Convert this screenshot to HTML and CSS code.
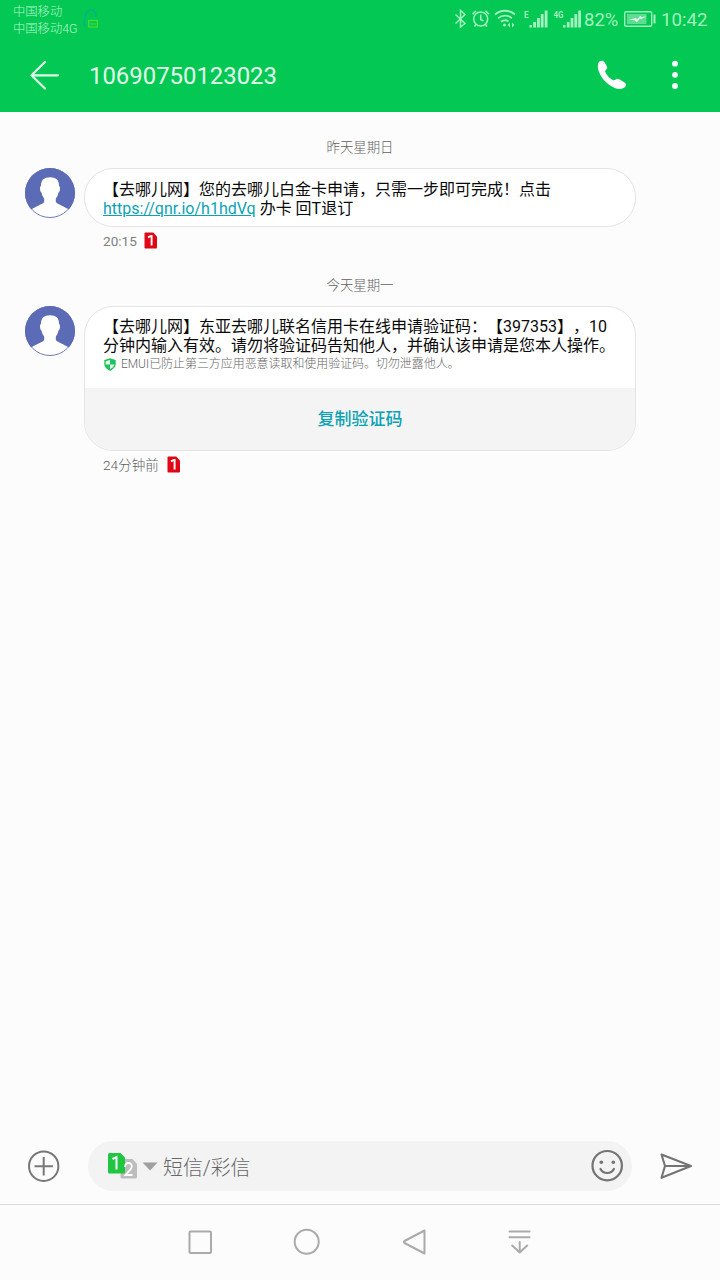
FILE: index.html
```html
<!DOCTYPE html>
<html lang="zh-CN">
<head>
<meta charset="utf-8">
<title>10690750123023</title>
<link rel="stylesheet" href="styles.css">
</head>
<body>
<div class="screen">
  <header class="top">
    <div class="status">
      <div class="carriers"><div>中国移动</div><div>中国移动4G</div></div>
      <svg class="cloud" width="18" height="20" viewBox="82 9 18 20" fill="none"><path d="M85 26c-2-3-1-6 0-9 1-4 3-7 6-7 3 0 5 3 5 7" stroke="#00b386" stroke-width="1.6"/><rect x="88.7" y="20.5" width="8.6" height="6.500" stroke="#4fdc2c" stroke-width="1.2"/><path d="M90 24h6" stroke="#4fdc2c"/></svg>
      <div class="tray">
        <svg width="17" height="40" viewBox="453 0 17 40" fill="none" stroke="currentColor" stroke-width="1.5"><path d="M455.500 14.500L465 23.500L460.500 27V10.500L465 14.500L455.500 23.500"/></svg>
        <svg width="22" height="40" viewBox="470 0 22 40" fill="none" stroke="currentColor" stroke-width="1.6"><circle cx="480.700" cy="19" r="7"/><path d="M480.700 14.500V19.500L483.500 21M472.500 14.200l3.500-3.500M485.500 10.700l3.500 3.500M476 24.500l-1.500 2M485.500 24.500l1.500 2"/></svg>
        <svg width="27" height="40" viewBox="492 0 27 40" fill="none" stroke="currentColor" stroke-width="1.8"><path d="M495 14.500c5.500-5 14.500-5 20 0M498.200 18.200c4-3.500 9.600-3.500 13.600 0M501 21.800c2.500-2 5-2 7.500-.5"/><circle cx="504.500" cy="25" r="1.600" fill="currentColor" stroke="none"/><path d="M507.500 25l2.500-2.500v5zM514.500 25l-2.500-2.500v5z" fill="currentColor" stroke="none"/></svg>
        <svg width="33" height="40" viewBox="519 0 33 40" fill="currentColor"><text class="net" x="524" y="18" textLength="4.500" lengthAdjust="spacingAndGlyphs">E</text><path d="M529.500 25h2.500v2.500h-2.500zM533.200 22h2.800v5.500h-2.800zM537 18h2.800v9.500H537zM540.800 14h2.800v13.500h-2.800zM544.700 10.500h2.800v17h-2.800z"/></svg>
        <svg width="32" height="40" viewBox="552 0 32 40" fill="currentColor"><text class="net" x="553.500" y="18" textLength="10" lengthAdjust="spacingAndGlyphs">4G</text><path d="M563 25h2.500v2.500H563zM566.800 22h2.800v5.500h-2.800zM570.600 18h2.800v9.500h-2.800zM574.400 14h2.800v13.500h-2.800zM578.200 10.500h2.800v17h-2.800z"/></svg>
        <span class="percent">82%</span>
        <svg width="37" height="40" viewBox="621 0 37 40"><rect x="624.700" y="11.700" width="27" height="14.600" rx="1.500" fill="none" stroke="currentColor" stroke-width="1.400"/><path d="M627 14h19.500v10H627z" fill="currentColor" opacity=".55"/><path d="M653.500 14.500h2v9h-2z" fill="currentColor"/><path d="M629 19.500l7-1.500 1 1.500 3-3.500 1.500 1 5-.5-5 2.500-1.500-.5-3.500 4-1.500-2z" fill="#e6fff0"/></svg>
        <span class="clock">10:42</span>
      </div>
    </div>
    <div class="titlebar">
      <svg width="30" height="32" viewBox="29 59 30 32" fill="none" stroke="#e0ffeb" stroke-width="2.200" stroke-linecap="round" stroke-linejoin="round"><path d="M58 75.300H31.500M45 62L31.500 75.300L45 88.500"/></svg>
      <h1 class="number">10690750123023</h1>
      <svg width="30" height="32" viewBox="597 59 30 32" fill="#fff"><path d="M598.200 63.500c.4-1.800 2-2.800 3.600-2.800 1.300 0 2 .5 2.700 1.600l2.200 3.700c.8 1.400.7 2.500-.4 3.500-1.200 1-1.400 1.900-.7 3.200 1.500 3 3.800 5.300 6.700 7 1.300.8 2.300.7 3.300-.1 1.200-1 2.300-1 3.600-.3l4.600 2.700c2.400 1.400 2.800 2.700 1.600 4.600-1.700 2.700-6.500 3.200-10.700 1.400-7.500-3.300-13.500-9.700-16-16.700-.9-2.600-1.100-5.400-.5-7.800z"/></svg>
      <svg class="more" width="8" height="32" viewBox="671 59 8 32" fill="#fff"><circle cx="675" cy="63.700" r="2.900"/><circle cx="675" cy="74.800" r="2.900"/><circle cx="675" cy="86" r="2.900"/></svg>
    </div>
  </header>

  <svg class="defs" width="0" height="0">
    <symbol id="avatar" viewBox="0 0 50 50"><circle cx="25" cy="25" r="25" fill="#5c6bb6"/><path d="M16 18c0-6 3-8.700 9-8.700s9 2.700 9 8.700c1.500 0 1.300 5.500-.5 6.500-.5 2.500-1.500 4.500-2.700 6.200v3.100c0 1.500 5.700 3.700 12.400 7.300l1.200.5A24.200 24.200 0 0 1 5.600 41.600l1.200-.5c6.700-3.600 12.400-5.800 12.400-7.300v-3.100c-1.200-1.700-2.200-3.700-2.700-6.200-1.800-1-2-6.500-.5-6.500z" fill="#fff"/><circle cx="25" cy="25" r="24.500" fill="none" stroke="#5c6bb6" stroke-width=".9"/></symbol>
    <symbol id="sim" viewBox="0 0 14 17"><path d="M1.500.5h7.700L13 4.500v11q0 1-1 1H1.500q-1 0-1-1v-14q0-1 1-1z" fill="#df0716"/><path d="M4 5.300L7 3.900h.6v9.600" fill="none" stroke="#fff" stroke-width="1.900"/></symbol>
  </svg>

  <main class="thread">
    <div class="day first">昨天星期日</div>
    <section class="message">
      <svg class="avatar" width="50" height="50"><use href="#avatar"/></svg>
      <div>
        <div class="bubble short"><p>【去哪儿网】您的去哪儿白金卡申请，只需一步即可完成！点击<br><a class="link">https://qnr.io/h1hdVq</a> 办卡 回T退订</p></div>
        <div class="meta">20:15<svg width="14" height="17"><use href="#sim"/></svg></div>
      </div>
    </section>
    <div class="day second">今天星期一</div>
    <section class="message">
      <svg class="avatar" width="50" height="50"><use href="#avatar"/></svg>
      <div>
        <div class="bubble code">
          <p>【去哪儿网】东亚去哪儿联名信用卡在线申请验证码：【397353】，10<br>分钟内输入有效。请勿将验证码告知他人，并确认该申请是您本人操作。</p>
          <div class="guard"><svg width="12" height="13" viewBox="0 0 12 13"><path d="M6 .3L11.700 2v4c0 3-2.500 5.500-5.700 6.700C2.800 11.500.3 9 .3 6V2z" fill="#20c45c"/><path d="M6 2v4.500H1.700V3.200zM6 6.500h4.300C10 8.500 8.300 10.200 6 11.200z" fill="#e4fbed"/></svg>EMUI已防止第三方应用恶意读取和使用验证码。切勿泄露他人。</div>
          <div class="copy">复制验证码</div>
        </div>
        <div class="meta late">24分钟前<svg width="14" height="17"><use href="#sim"/></svg></div>
      </div>
    </section>
  </main>

  <footer class="composer">
    <svg width="34" height="34" viewBox="27 1149 34 34" fill="none" stroke="#777" stroke-width="2"><circle cx="43.700" cy="1166.200" r="14.700"/><path d="M34.500 1166.200h18.400M43.700 1157v18.400"/></svg>
    <div class="field">
      <svg width="32" height="30" viewBox="107 1151 32 30"><path d="M122 1159h10.500l4.500 5v13q0 1.500-1.500 1.500H122q-1.500 0-1.500-1.500v-16.500q0-1.500 1.500-1.500z" fill="#bdbdbd"/><path d="M109.500 1153h11l4.500 4.500V1172q0 1.500-1.500 1.500h-14q-1.500 0-1.500-1.500v-17.500q0-1.500 1.500-1.500z" fill="#20c63f"/><path d="M112.500 1159l4-2v12.500" fill="none" stroke="#fff" stroke-width="2"/><path d="M125 1167c.2-2.800 1.500-4 3.400-4 3.700 0 4.200 3.700 2.400 6l-5.300 6h7" fill="none" stroke="#fff" stroke-width="1.800"/></svg>
      <svg class="caret" width="16" height="9" viewBox="0 0 16 9"><path d="M.5.5h15L8 8.500z" fill="#a0a0a0"/></svg>
      <span class="hint">短信/彩信</span>
      <svg class="smile" width="34" height="34" viewBox="590 1149 34 34" fill="none" stroke="#747474" stroke-width="2.200" stroke-linecap="round"><circle cx="607.200" cy="1165.700" r="14.700"/><path d="M600.500 1169c2.800 5.300 10.600 5.300 13.400 0"/><circle cx="601.300" cy="1162.300" r="1.800" fill="#747474" stroke="none"/><circle cx="613.300" cy="1162.300" r="1.800" fill="#747474" stroke="none"/></svg>
    </div>
    <svg width="34" height="28" viewBox="659 1152 34 28" fill="none" stroke="#747474" stroke-width="2.100" stroke-linejoin="round"><path d="M661.500 1154.500L691 1166L661.500 1177.800L665 1166zM665 1166h25"/></svg>
  </footer>

  <nav class="nav">
    <svg width="26" height="28" viewBox="187 1228 26 28"><rect x="189.500" y="1231.500" width="21.500" height="21.500" rx="1"/></svg>
    <svg width="28" height="28" viewBox="293 1228 28 28"><circle cx="306.700" cy="1241.700" r="12"/></svg>
    <svg width="26" height="28" viewBox="401 1228 26 28"><path d="M423.500 1230.500V1253.500L403.500 1243q-1.200-1 0-2z"/></svg>
    <svg width="24" height="28" viewBox="508 1228 24 28"><path d="M509.500 1231.500h20M509.500 1237.200h20M519.700 1242v10.500M512.200 1245.500l7.500 7 7.500-7"/></svg>
  </nav>
</div>
</body>
</html>
```
FILE: styles.css
```css
* { box-sizing: border-box; }
body {
  margin: 0;
  background: #fcfcfc;
  font-family: Roboto, "Noto Sans CJK SC", sans-serif;
  text-spacing-trim: space-all;
}
svg { display: block; flex: none; }
p, h1 { margin: 0; font-weight: 400; }
.defs { position: absolute; }
.screen {
  width: 720px;
  height: 1280px;
  display: flex;
  flex-direction: column;
  overflow: hidden;
}
.top { height: 112px; background: #03c853; flex: none; }
.status { height: 38px; display: flex; padding-left: 13px; }
.carriers {
  width: 69px;
  padding-top: 4px;
  font-size: 12.3px;
  line-height: 17px;
  font-weight: 300;
  color: #b4f7cc;
  white-space: nowrap;
}
.cloud { margin-top: 9px; }
.tray {
  height: 40px;
  margin-left: auto;
  padding-right: 12px;
  display: flex;
  align-items: center;
  color: #a2f3bf;
  font-size: 19px;
  line-height: 40px;
}
.net { font: 700 9px Roboto, sans-serif; }
.percent { width: 37px; font-size: 18.500px; white-space: nowrap; }
.clock { width: 50px; padding-left: 3px; font-size: 18.700px; white-space: nowrap; }
.titlebar {
  height: 74px;
  padding: 0 41px 0 29px;
  display: flex;
  align-items: center;
}
.number {
  flex: 1;
  margin-left: 30px;
  padding-top: 2px;
  font-size: 23.900px;
  line-height: 32px;
  color: #e2ffec;
}
.more { margin-left: 44px; }

.thread { flex: 1; }
.day {
  text-align: center;
  font-size: 13.400px;
  line-height: 20px;
  font-weight: 300;
  color: #606060;
}
.first { padding: 26px 0 10px; }
.second { padding: 22px 0 10px; }
.message { display: flex; gap: 9px; padding-left: 25px; }
.bubble {
  width: 552px;
  border: 1px solid #e4e4e4;
  background: #fff;
  color: #0a0a0a;
  font-size: 16px;
  line-height: 19px;
  white-space: nowrap;
  overflow: hidden;
}
.short { height: 59px; border-radius: 29px; padding: 11px 18px; }
.code { height: 145px; border-radius: 29px; }
.code p { padding: 10px 18px 0; }
.link { color: #0ba2b5; text-decoration: underline; font-size: 16px; }
.guard {
  display: flex;
  align-items: center;
  gap: 5px;
  height: 18px;
  padding-left: 19px;
  font-size: 11.950px;
  font-weight: 300;
  color: #666;
}
.copy {
  height: 63px;
  margin-top: 15px;
  background: #f4f4f4;
  color: #0ba2b5;
  font-size: 17px;
  font-weight: 500;
  line-height: 63px;
  text-align: center;
}
.meta {
  display: flex;
  align-items: center;
  gap: 7px;
  height: 27px;
  padding-left: 19px;
  font-size: 13.600px;
  color: #808080;
}
.late { height: 26px; font-weight: 300; color: #606060; gap: 8px; }

.composer {
  height: 76px;
  padding: 0 27px;
  display: flex;
  align-items: center;
  flex: none;
}
.field {
  width: 544px;
  height: 50px;
  margin: 0 27px;
  padding: 0 8px 0 19px;
  display: flex;
  align-items: center;
  border-radius: 25px;
  background: #f3f3f3;
  flex: none;
}
.caret { margin-left: 3px; }
.hint { margin-left: 5px; font-size: 19.900px; color: #666; font-weight: 300; }
.smile { margin-left: auto; }
.nav {
  height: 76px;
  padding: 0 188px 2px 187px;
  border-top: 1px solid #dcdcdc;
  display: flex;
  align-items: center;
  justify-content: space-between;
  flex: none;
}
.nav svg {
  fill: none;
  stroke: #aaa;
  stroke-width: 2;
  stroke-linejoin: round;
  stroke-linecap: round;
}
```
